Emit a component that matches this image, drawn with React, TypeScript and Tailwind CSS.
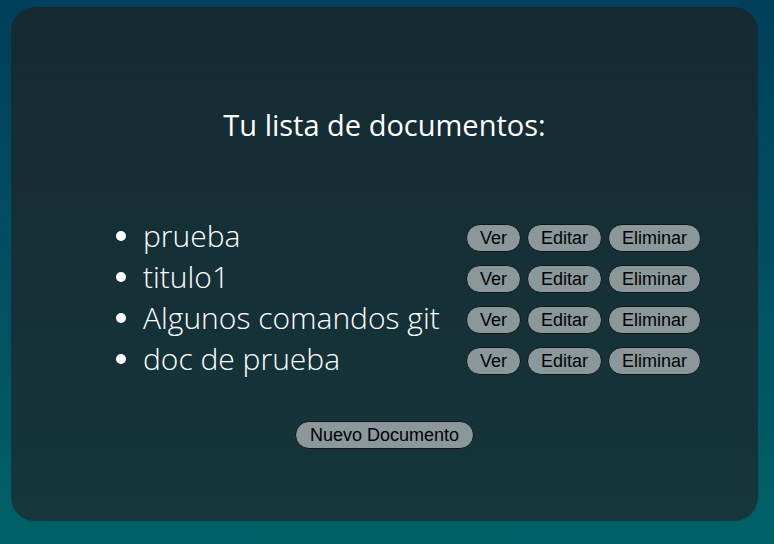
const docs = ["prueba", "titulo1", "Algunos comandos git", "doc de prueba"];

function Boton({ children, wide }: { children: React.ReactNode; wide?: boolean }) {
  return (
    <button
      className={
        "rounded-full border border-[#141414] bg-[#8a989b] py-[2px] font-['Liberation_Sans',Arial,sans-serif] text-[18px] leading-[22px] text-black " +
        (wide ? "px-[14px]" : "px-[13px]")
      }
    >
      {children}
    </button>
  );
}

export default function App() {
  return (
    <div className="h-[544px] w-full bg-gradient-to-b from-[#003f5b] to-[#006167] pl-[11px] pr-[16px] pt-[7px] pb-[23px]">
      <div className="flex h-full flex-col items-center rounded-[24px] bg-gradient-to-b from-[#152a33] to-[#15363a] font-['Open_Sans',sans-serif] text-white">
        <h1 className="mt-[98px] text-[29px] font-medium leading-[40px]">
          Tu lista de documentos:
        </h1>

        <ul className="mt-[70px] flex w-full flex-col pl-[105px]">
          {docs.map((doc) => (
            <li key={doc} className="flex h-[41px] items-center">
              <span className="mr-[17px] h-[10px] w-[10px] rounded-full bg-white" />
              <span className="w-[323px] text-[30px] font-light leading-[40px]">{doc}</span>
              <div className="flex gap-[6px] pt-[5px]">
                <Boton>Ver</Boton>
                <Boton>Editar</Boton>
                <Boton>Eliminar</Boton>
              </div>
            </li>
          ))}
        </ul>

        <div className="mt-[42px]">
          <Boton wide>Nuevo Documento</Boton>
        </div>
      </div>
    </div>
  );
}
